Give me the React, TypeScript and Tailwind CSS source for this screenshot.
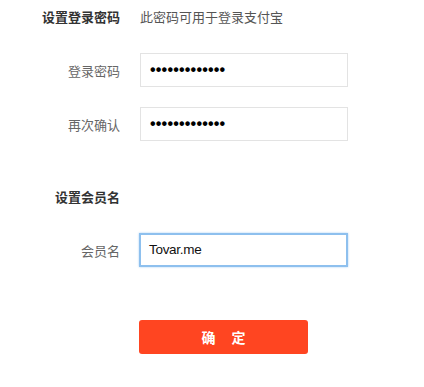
import React from "react";

const cjk = { fontFamily: '"Noto Sans CJK SC", "Noto Sans", sans-serif' };
const latin = { fontFamily: '"Liberation Sans", "Noto Sans CJK SC", sans-serif' };

function Label({ children, bold = false }: { children: React.ReactNode; bold?: boolean }) {
  return (
    <div
      className={`w-[120px] shrink-0 text-right text-[13px] leading-none ${bold ? "font-bold text-[#333333]" : "text-[#666666]"}`}
      style={cjk}
    >
      {children}
    </div>
  );
}

export default function App() {
  return (
    <div className="w-[424px] h-[387px] bg-white overflow-hidden pt-[5px]">
      <div className="flex items-center h-[22px]">
        <Label bold>设置登录密码</Label>
        <div className="ml-[20px] text-[13px] text-[#555555] leading-none" style={cjk}>
          此密码可用于登录支付宝
        </div>
      </div>

      <div className="flex items-center mt-[26px] h-[34px]">
        <Label>登录密码</Label>
        <div className="ml-[20px] w-[208px] h-[34px] border border-[#e3e3e3] bg-white flex items-center pl-[9px]">
          <span className="text-[16px] tracking-[0.2px] text-black leading-none font-bold" style={latin}>
            •••••••••••••
          </span>
        </div>
      </div>

      <div className="flex items-center mt-[20px] h-[34px]">
        <Label>再次确认</Label>
        <div className="ml-[20px] w-[208px] h-[34px] border border-[#e3e3e3] bg-white flex items-center pl-[9px]">
          <span className="text-[16px] tracking-[0.2px] text-black leading-none font-bold" style={latin}>
            •••••••••••••
          </span>
        </div>
      </div>

      <div className="flex items-center mt-[44px] h-[22px]">
        <Label bold>设置会员名</Label>
      </div>

      <div className="flex items-center mt-[26px] h-[34px]">
        <Label>会员名</Label>
        <div className="ml-[19px] w-[209px] h-[34px] border-2 border-[#8ec0ee] shadow-[0_0_2px_#a9d0f5] bg-white flex items-center pl-[8px]">
          <span className="text-[13.5px] text-[#111111] leading-none tracking-[-0.3px]" style={latin}>
            Tovar.me
          </span>
        </div>
      </div>

      <div className="flex mt-[53px]">
        <div className="w-[139px] shrink-0" />
        <button
          className="w-[169px] h-[34px] rounded-[3px] bg-[#ff4521] text-white text-[14px] font-bold flex items-center justify-center gap-[16px]"
          style={cjk}
        >
          <span>确</span>
          <span>定</span>
        </button>
      </div>
    </div>
  );
}
